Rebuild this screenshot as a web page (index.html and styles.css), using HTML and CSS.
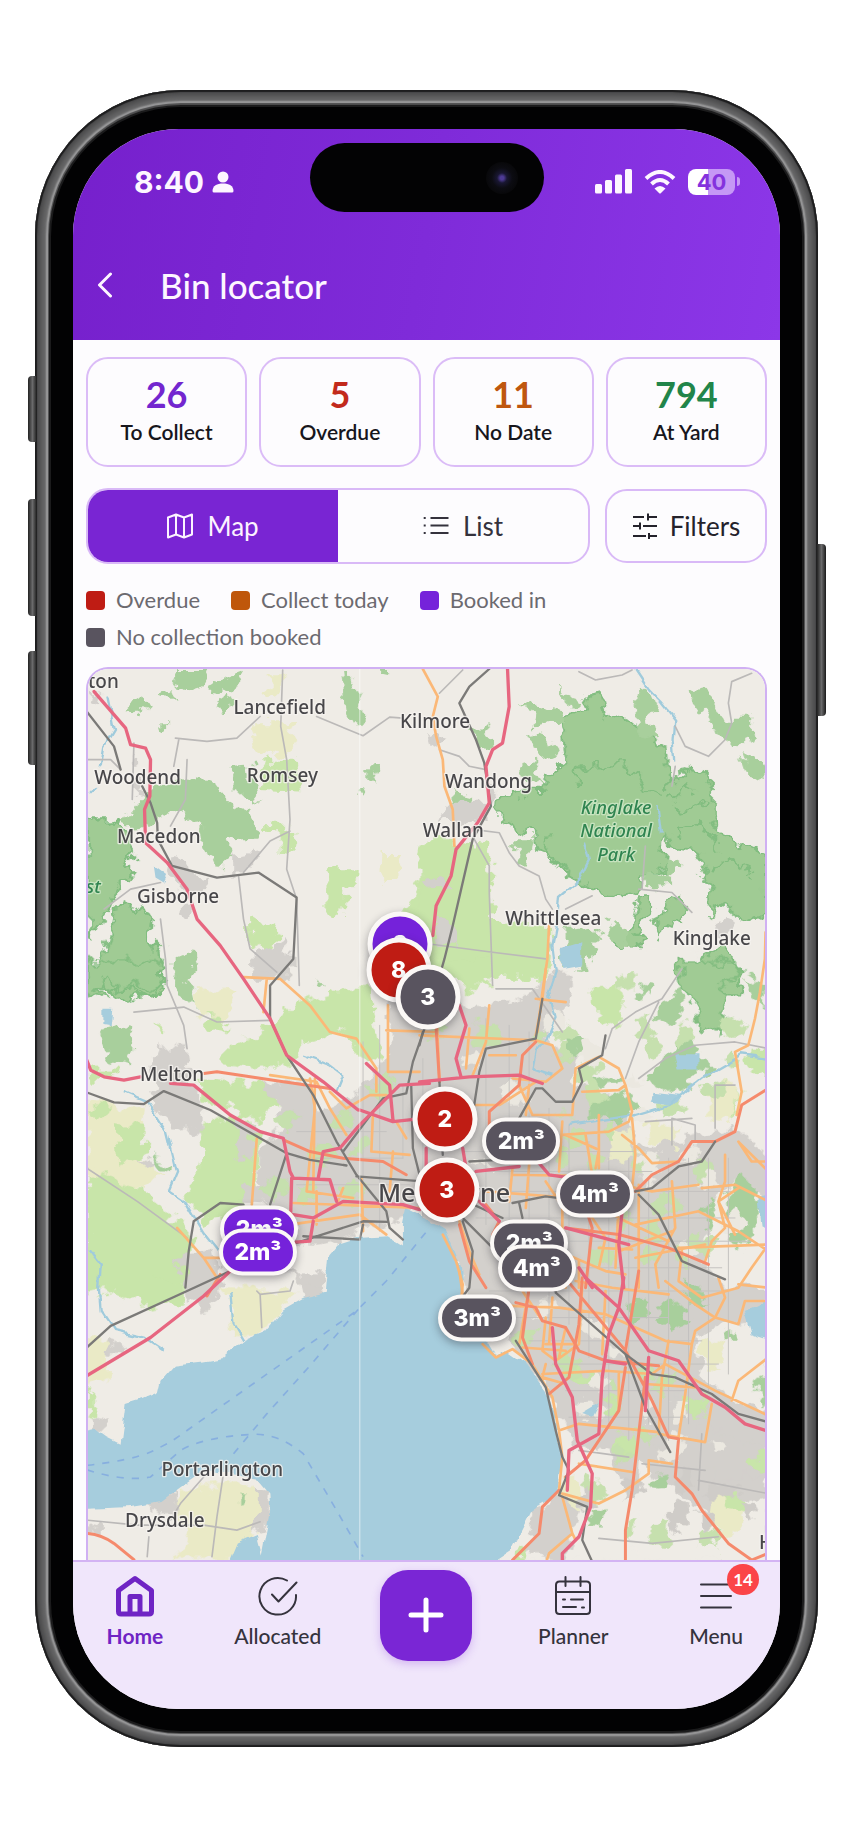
FILE: index.html
```html
<!DOCTYPE html>
<html lang="en">
<head>
<meta charset="utf-8">
<meta name="viewport" content="width=device-width, initial-scale=1">
<title>Bin locator</title>
<link rel="stylesheet" href="styles.css">
</head>
<body>
<div class="phone">
  <span class="side-key key-action"></span>
  <span class="side-key key-up"></span>
  <span class="side-key key-down"></span>
  <span class="side-key key-power"></span>
  <div class="bezel">
    <div class="screen">
      <header class="header">
        <div class="status">
          <div class="status-time">
            <span>8:40</span>
            <svg class="person" viewBox="0 0 22 22" aria-hidden="true"><circle cx="11" cy="6" r="5.5"/><path d="M0.5 20C0.5 15 5 12.6 11 12.6S21.5 15 21.5 20Q21.5 21.6 20 21.6H2Q.5 21.6 .5 20Z"/></svg>
          </div>
          <div class="island"><span class="camera"></span></div>
          <div class="status-icons">
            <svg class="signal" viewBox="0 0 37 25" aria-hidden="true"><rect x="0" y="15" width="7" height="9.500" rx="1.500"/><rect x="10" y="11" width="7" height="13.500" rx="1.500"/><rect x="20" y="5.500" width="7" height="19" rx="1.500"/><rect x="30" y="0" width="7" height="24.500" rx="1.500"/></svg>
            <svg class="wifi" viewBox="0 0 32 24" aria-hidden="true"><path class="wifi-arc" d="M2 8.500Q16-4.500 30 8.500M7.500 14Q16 6 24.500 14"/><path d="M10.500 18.500Q16 13.500 21.500 18.500L17 23Q16 24 15 23Z"/></svg>
            <span class="battery"><span class="battery-body">40</span><span class="battery-nub"></span></span>
          </div>
        </div>
        <div class="title-bar">
          <button class="back" type="button" aria-label="Back"><svg viewBox="0 0 16 26" aria-hidden="true"><path d="M13.500 2L2.500 13L13.500 24"/></svg></button>
          <h1 class="title">Bin locator</h1>
        </div>
      </header>

      <main class="content">
        <section class="stats">
          <div class="stat"><strong class="stat-value purple">26</strong><span class="stat-label">To Collect</span></div>
          <div class="stat"><strong class="stat-value red">5</strong><span class="stat-label">Overdue</span></div>
          <div class="stat"><strong class="stat-value orange">11</strong><span class="stat-label">No Date</span></div>
          <div class="stat"><strong class="stat-value green">794</strong><span class="stat-label">At Yard</span></div>
        </section>

        <div class="controls">
          <div class="toggle">
            <button class="segment active" type="button" aria-pressed="true">
              <svg class="icon" viewBox="0 0 26 26" aria-hidden="true"><path d="M1 4.500L9 1.500L17 4.500L25 1.500V21.500L17 24.500L9 21.500L1 24.500ZM9 1.500V21.500M17 4.500V24.500"/></svg>
              <span>Map</span>
            </button>
            <button class="segment" type="button" aria-pressed="false">
              <svg class="icon" viewBox="0 0 26 26" aria-hidden="true"><path d="M7.500 5H25.500M7.500 12.500H25.500M7.500 20H25.500M.7 5H2.700M.7 12.500H2.700M.7 20H2.700"/></svg>
              <span>List</span>
            </button>
          </div>
          <button class="filters" type="button">
            <svg class="icon" viewBox="0 0 26 26" aria-hidden="true"><path d="M1 4H12M16 0.500V7.500M16 4H25M1 13H8M8 9.500V16.500M11 13H25M1 23H14M17 20V26M17 23H25"/></svg>
            <span>Filters</span>
          </button>
        </div>

        <ul class="legend">
          <li><i class="swatch bg-red"></i>Overdue</li>
          <li><i class="swatch bg-orange"></i>Collect today</li>
          <li><i class="swatch bg-purple"></i>Booked in</li>
          <li><i class="swatch bg-grey"></i>No collection booked</li>
        </ul>

        <section class="map" aria-label="Bin map">
          <svg class="map-art" viewBox="48 27 2046 2682" preserveAspectRatio="xMidYMid slice" aria-hidden="true">
            <defs>
              <filter id="rough" x="0" y="0" width="2150" height="2750" filterUnits="userSpaceOnUse">
                <feTurbulence type="fractalNoise" baseFrequency="0.022" numOctaves="3" seed="4" result="n"/>
                <feDisplacementMap in="SourceGraphic" in2="n" scale="70" xChannelSelector="R" yChannelSelector="G"/>
              </filter>
              <filter id="wobble" x="0" y="0" width="2150" height="2750" filterUnits="userSpaceOnUse">
                <feTurbulence type="fractalNoise" baseFrequency="0.02" numOctaves="2" seed="9" result="n"/>
                <feDisplacementMap in="SourceGraphic" in2="n" scale="26" xChannelSelector="R" yChannelSelector="G"/>
              </filter>
            </defs>
            <rect class="land" x="0" y="0" width="2150" height="2750"/>

            <!-- land cover -->
            <g filter="url(#rough)">
              <g>
                <path class="farm" d="M540 190L680 190L650 290L560 270ZM930 590L990 590L980 665L920 665ZM590 40L640 40L620 120L590 110Z"/>
                <path class="grass" d="M585 490L660 490L660 525L585 530ZM635 520L680 520L675 580L635 575ZM770 630L870 630L870 675L825 680L820 765L770 755ZM590 300L690 300L700 390L560 385ZM1000 760L1080 590L1120 560L1120 960L960 960ZM540 770L590 800L630 810L600 890L540 860Z"/>
                <path class="wood" d="M320 30L420 30L400 80L350 95L300 80ZM440 60L510 35L520 70L460 100L420 90ZM165 155L190 110L235 130L220 150ZM255 100L300 90L310 115L270 120ZM275 190L305 190L305 215L280 215ZM440 130L470 110L490 140L460 160ZM820 30L835 30L870 120L890 170L880 200L830 175L825 100ZM460 320L540 315L560 420L580 440L520 410L490 380ZM340 350L440 370L490 440L540 460L570 520L520 540L470 545L480 600L440 635L430 590L380 560L400 500L340 450L250 480L200 510L150 500L230 400ZM905 310L935 300L925 350L905 385ZM870 380L880 380L875 410L865 410ZM310 900L360 880L380 930L340 990L310 950ZM925 30L960 30L955 45L930 40Z"/>
                <path class="wood deep" d="M48 490L75 480L110 480L150 500L190 560L170 610L190 640L140 700L110 760L60 830L48 800ZM130 750L170 740L240 760L230 820L270 870L275 960L250 1000L140 1020L60 960L110 860L120 800ZM48 930L140 960L270 950L280 1000L220 1010L180 980L120 1000L48 970Z"/>
                <path class="urban" d="M480 590L560 575L570 600L520 640L480 640ZM310 590L350 600L370 650L420 660L400 700L330 690L300 640ZM560 890L640 840L660 960L540 960ZM190 290L215 300L210 330L190 330ZM190 370L225 380L220 410L190 400ZM60 80L85 95L80 130L55 110ZM320 740L360 740L370 770L330 765Z"/>
              </g>
              <g transform="translate(1050 0)">
                <path class="wood deep" d="M415 175L490 160L510 100L550 95L565 160L640 190L690 230L740 260L750 380L800 320L840 330L880 370L880 470L910 540L960 550L1050 590L1050 760L1000 790L960 780L920 730L870 770L880 690L830 570L760 560L740 520L730 640L700 640L650 690L600 720L540 700L480 680L430 620L370 580L330 520L240 480L245 420L320 400L370 400L380 340L440 320L430 240ZM660 700L700 700L700 740L660 820L690 850L620 870L590 850L640 800ZM740 730L790 700L790 790L720 830L710 790ZM840 900L900 870L960 920L960 1010L880 1010L820 980Z"/>
                <path class="park-line" d="M480 320H620L650 350L680 390L730 400M480 320V400M390 540L380 600L430 620M760 420L800 380L830 400M760 440L800 450L870 420M770 520L830 500L880 520L900 580M870 620L940 600L1000 640"/>
                <path class="wood" d="M300 130L420 150L430 180L350 200ZM430 90L490 130L450 150ZM330 210L400 240L420 300L370 310ZM660 80L700 100L720 150L680 200L720 230L660 240L650 150ZM810 90L860 80L890 140L920 180L1000 180L1010 230L920 270L900 220L850 150ZM150 200L210 200L215 260L180 270ZM310 310L350 300L370 370L310 350ZM100 400L160 415L160 450L110 440ZM440 810L530 800L550 850L500 920L440 930ZM970 280L1045 320L1045 355L990 340ZM730 600L785 610L780 645L730 640ZM680 640L750 650L750 680L690 685ZM290 540L340 540L330 610L300 610ZM580 780L640 830L620 860L560 840Z"/>
                <path class="grass" d="M10 540L100 540L200 560L220 660L215 800L400 810L390 960L0 960L0 600ZM200 780L380 800L375 880L230 870Z"/>
                <path class="land" d="M100 480L160 470L190 520L150 540ZM530 850L700 870L850 850L820 960L500 960Z"/>
                <path class="urban" d="M80 430L190 430L200 470L140 500L50 480ZM20 650L80 655L100 690L30 695ZM50 780L100 800L110 870L50 850ZM20 230L70 220L80 250L30 265ZM200 380L240 400L230 430L200 420ZM880 790L930 780L940 820L890 830Z"/>
              </g>
              <g transform="translate(0 930)">
                <path class="farm" d="M48 400L220 420L200 560L280 620L200 640L48 560ZM380 60L500 60L450 160L380 150ZM48 560L160 560L220 660L48 640Z"/>
                <path class="grass" d="M48 610L200 660L280 720L370 820L350 960L48 960ZM380 480L500 440L580 480L560 600L520 740L400 760L340 680L380 640L390 560ZM130 470L230 480L220 560L150 590ZM460 230L560 210L640 120L760 80L870 60L900 160L780 200L700 230L680 280L560 300L460 290ZM380 320L580 350L640 400L560 450L470 420L400 400ZM600 180L690 130L720 230L650 220ZM250 165L285 170L280 185L250 180ZM790 60L900 60L930 280L860 260L820 170L760 150ZM60 300L140 300L130 330L60 330ZM60 420L110 420L100 450L60 450ZM400 150L480 160L480 190L410 180Z"/>
                <path class="wood" d="M90 190L160 170L190 210L170 290L120 270ZM320 20L370 60L380 100L340 100ZM245 570L300 585L295 605L250 590ZM740 30L760 55L735 50Z"/>
                <path class="wood deep" d="M48 -20L280 -20L270 40L230 60L180 40L150 60L100 20L80 60L110 90L48 70Z"/>
                <path class="urban" d="M270 230L350 240L360 300L340 340L400 400L400 480L310 490L270 440L250 370L240 300ZM500 450L560 470L540 580L500 570ZM570 340L700 340L760 420L870 380L900 330L960 250L960 100L1100 100L1100 720L950 760L880 790L800 810L690 830L660 740L600 720L560 620L570 540L640 480L620 420ZM300 860L440 850L460 960L400 1040L350 1000L340 920ZM200 570L260 590L230 610ZM540 -40L680 -40L680 0L540 10ZM520 640L600 660L590 710L520 700ZM680 920L760 930L770 990L700 1000Z"/>
                <path class="scatter grass-line" d="M640 440L760 560L620 660L820 700L900 560L820 460L960 340"/>
              </g>
              <g transform="translate(1050 930)">
                <path class="urban" d="M0 100L210 110L370 60L380 20L460 20L450 110L380 200L420 260L480 250L460 340L620 400L660 540L800 510L960 480L1050 560L1050 700L950 640L880 700L860 900L920 960L1050 960L1050 1860L900 1780L700 1560L500 1500L440 1380L380 1260L250 1090L150 960L100 860L0 740Z"/>
                <path class="grass" d="M40 -30L210 -30L220 60L130 60L100 20L60 10ZM520 50L600 40L620 120L580 180L530 150ZM900 340L960 360L950 460L880 440ZM1000 240L1050 240L1050 320L990 300Z"/>
                <path class="wood" d="M680 50L710 60L690 90L670 80ZM720 100L790 60L800 140L760 180L720 150ZM790 200L830 240L880 290L810 340L740 380L680 340L700 300L760 260ZM440 210L480 200L520 240L450 260ZM510 340L600 310L610 340L540 350ZM520 400L620 370L670 420L600 460L530 450ZM980 20L1040 60L1040 120L1000 90ZM780 190L800 195L800 215L780 210ZM960 620L1010 650L1020 800L960 860L930 800L920 700ZM870 700L890 740L880 790L855 780Z"/>
                <path class="wood deep" d="M780 -20L960 -20L950 30L910 60L930 150L900 200L840 180L830 100L790 60Z"/>
                <path class="farm" d="M570 480L640 480L650 570L570 580ZM870 340L960 350L940 470L880 460ZM680 470L780 480L760 530L690 520Z"/>
                <!-- suburban parks -->
                <path class="scatter grass-line" d="M30 180L400 210L600 480L300 560L900 600L700 720L400 680L900 850L600 880L300 820"/>
                <path class="scatter grass-line" d="M620 20L680 180L640 260L900 160L1000 200L860 400L700 420M420 180L520 290L440 440"/>
                <path class="scatter land-line" d="M380 150L640 330L700 620L820 560L950 760L760 880M150 260L300 400L200 600"/>
              </g>
              <g transform="translate(0 1860)">
                <path class="grass" d="M48 -10L240 -10L340 30L340 70L220 90L170 70L120 40L48 50ZM48 330L70 330L70 420L48 410Z"/>
                <path class="farm" d="M48 190L120 180L120 290L48 330ZM450 30L680 40L640 90L570 170L490 170L480 60ZM340 640L560 620L590 680L560 770L470 850L310 850L350 760L310 700Z"/>
                <path class="urban" d="M60 420L110 430L110 465L60 465ZM110 180L160 200L160 230L110 220ZM230 680L320 630L320 700L250 710ZM560 620L600 650L590 760L560 770ZM640 -10L765 -10L765 30L690 10ZM48 760L90 740L90 780Z"/>
                <path class="wood" d="M510 650L530 655L525 680L510 675Z"/>
              </g>
              <g transform="translate(1050 1860)">
                <path class="land" d="M430 500L560 520L640 640L620 850L340 850L430 700ZM660 560L780 640L860 700L1050 650L1050 850L640 850ZM830 160L1050 110L1050 400L950 380L850 290Z"/>
                <path class="farm" d="M850 180L930 200L900 280L850 250ZM880 640L980 700L940 780L860 740ZM430 600L480 600L480 700L430 660Z"/>
                <path class="urban" d="M340 700L420 650L480 700L440 850L330 820ZM770 670L820 680L810 720L770 720ZM830 440L960 480L1050 520L1030 590L900 610L840 560ZM660 280L780 320L740 520L660 450Z"/>
                <path class="grass" d="M920 640L990 670L980 710L920 700ZM580 470L660 470L650 540L580 530ZM560 360L610 370L590 420L560 400ZM450 280L540 290L530 330L460 310ZM790 350L870 370L850 420L790 400ZM980 540L1050 530L1050 580L980 570ZM280 820L340 790L330 850L270 850Z"/>
                <path class="wood" d="M720 80L790 70L820 130L770 160L710 130ZM620 90L680 60L690 120L640 140ZM690 600L750 590L740 630L700 625ZM510 710L560 720L550 740L510 740ZM1010 320L1050 300L1050 390L1020 360ZM790 10L850 30L870 80L820 80ZM920 170L960 165L950 190L925 190Z"/>
                <path class="scatter grass-line" d="M300 170L560 330L750 250L700 450L520 620L600 760L850 780L1000 820"/>
                <path class="scatter land-line" d="M360 90L620 180L480 400L820 400L760 520L960 500"/>
                <path class="scatter urban-line" d="M480 680L760 600L900 640L700 760L1000 700"/>
              </g>
            </g>

            <!-- water -->
            <g filter="url(#wobble)">
              <path class="water" transform="translate(0 1860)" d="M0 470L75 455L110 480L150 500L165 380L215 365L262 345L270 310L310 265L400 255L460 245L530 185L580 165L640 95L700 60L765 45L775 -70L800 -100L860 -120L960 -125L1000 -100L1000 -160L1010 -210L1050 -190L1130 -140L1160 -70L1175 -30L1180 60L1250 190L1280 240L1320 225L1370 260L1430 340L1460 420L1475 520L1480 560L1465 640L1425 680L1390 700L1370 740L1330 820L1270 860L470 870L500 800L560 775L575 830L600 700L598 650L560 605L480 590L400 580L330 630L270 675L180 690L0 698Z"/>
              <path class="water" d="M1475 870L1540 850L1540 920L1480 930ZM250 620L290 650L280 670L255 655ZM95 1050L125 1050L120 1100L95 1095ZM2030 1960L2110 1920L2110 2050L2050 2030ZM1820 1190L1890 1190L1890 1230L1830 1230ZM1755 1300L1840 1310L1820 1340L1740 1330ZM1540 2270L1590 2240L1570 2280ZM2070 1620L2110 1610L2110 1710L2080 1700Z"/>
              <path class="river" d="M1700 30L1740 90L1780 130L1820 180L1815 240L1820 300M1770 440L1780 520M1545 550L1560 600L1530 660L1470 710L1465 780L1450 860L1460 940L1440 1000L1460 1080L1430 1150L1400 1180L1390 1230L1450 1250M110 110L130 210L100 260L90 320M75 380L55 400M160 1300L230 1330L290 1420L310 1500L320 1540L295 1600L340 1630L400 1730L440 1780M50 1770L90 1820L85 1900L90 1960L130 2020L220 2040L280 2080M480 1900L490 2000L520 2050M700 1190L780 1220L820 1250L800 1300M2094 1200L2020 1190L1900 1260L1800 1340L1700 1370L1500 1400"/>
            </g>
            <path class="ferry" d="M48 2425Q180 2410 240 2385L300 2355L860 1960L950 1870L1080 1710M48 2438Q160 2475 240 2460L330 2380Q400 2340 540 2332Q620 2325 700 2390L800 2560L880 2700M490 2390L590 2270L720 2125L870 1950"/>

            <!-- minor roads and streets -->
            <g class="minor">
              <path d="M638 30L632 200L650 300L660 480L650 630L680 720L688 980M315 235L410 245L500 235L570 170M740 170L800 195L880 228L960 172L1000 175M325 240L310 320M190 250L185 420M350 300L345 420L300 500M660 515L600 545L520 640M505 650L520 780L540 870L620 940M270 780L285 900L290 980L340 1100L350 1170M190 1060L340 1045L440 1090L600 1085M100 750L180 690L270 670M48 300L120 300L150 330M48 1530L200 1630L350 1740"/>
              <path transform="translate(1050 0)" d="M480 35L530 60L610 45L640 30M130 30L60 100M1000 40L940 65L930 130L940 190M940 190L920 240L870 290L800 260L770 200M770 320L760 380M60 270L120 290L150 320L200 330M160 510L240 520L270 580L300 620L360 650L380 720L400 750M165 540L210 620L210 700L220 980M30 855L220 880L380 900M440 750L520 710M660 690L760 700L820 760M670 690L680 560"/>
              <path transform="translate(1050 930)" d="M790 0L730 90L650 130L580 180L560 240M720 100L660 220L620 330M660 330L740 270L830 230L950 220L1050 240M230 60L340 60L430 190M890 480L890 350L950 350M680 460L820 450M760 530L760 450L830 470L830 520"/>
              <path d="M560 1900L570 1910L575 2010M570 1910L660 1900L670 1870M458 2460L440 2580L425 2700M400 2460L330 2540L300 2590M48 2590L200 2605L400 2605L500 2620L570 2595M235 2640L230 2700M1590 2645L1750 2660L1950 2640M1890 2470L2100 2510M1900 2330L1890 2500M1530 2380L1680 2400M1720 2420L1910 2440"/>
            </g>
            <g class="streets">
              <path d="M880 1150V1700M930 1100V1720M1000 1280V1500M1060 1200V1680M1250 1080V1700M1320 1100V1800M1380 1120V1900M1440 1350V2000M1500 1400V2000M1560 1450V2100M1620 1500V2300M1680 1500V2350M1740 1560V2300M1800 1500V2350M1860 1500V2300M1920 1500V2200M1980 1500V2150"/>
              <path d="M680 1420H950M680 1500H1000M680 1580H1020M1180 1480H1700M1180 1540H1750M1180 1600H2000M1220 1680H2000M1250 1750H2050M1300 1830H1960M1260 1900H1980M1300 1980H1800M1380 2050H1900M1450 2120H1950M1490 2200H1850M1500 2280H1850"/>
            </g>

            <!-- primary roads -->
            <g class="primary">
              <path d="M1060 27L1105 110L1090 170L1100 230L1120 300L1125 380L1150 450L1155 560M1440 800L1435 900L1420 1000L1405 1120M2092 820L2090 900L2075 1000L2060 1080L2040 1160L2000 1180L2020 1300L2005 1370M600 1250L740 1270L780 1350L830 1430M560 1440L545 1640M720 1260L735 1350L710 1600L850 1620M735 1260L730 1600M780 1300L830 1350L900 1310L950 1310M910 1360L905 1480L1020 1490M520 955L630 960L720 1040L780 1120L860 1140L920 1230L920 1300M590 960L580 1060M955 1040L955 1240L1050 1240M950 1115L1100 1120M670 1635L1050 1650M740 1600V1700M875 1560L880 1720M660 1700L870 1670L950 1730M820 1590L800 1640M320 1710L400 1800L440 1860M400 1800L460 1800M970 1480L960 1600M980 1390L1010 1440"/>
              <path transform="translate(1050 930)" d="M0 200L350 215L400 230L430 300L380 340L280 330M50 90L60 340M210 110L200 220L160 320M350 90L440 100M380 0L370 90L350 200M150 180L140 300M210 260L290 260M170 410L240 410L350 340M300 350L340 440L460 440L470 300L540 265L600 300L620 350L600 365L490 370M330 350L320 440M620 350L640 430L630 460L570 490L430 500M640 450L650 560L640 660M610 500L660 540L700 585L780 580M440 500L540 545L530 600M500 500L520 620M540 440L540 600M430 460L420 610M280 620L600 625M280 600L270 700M330 590L320 720M430 690L430 900L440 960M510 700L620 760L750 820M600 700L590 900M660 650L660 960M760 640L770 780L710 890L720 960M850 660L950 650L1050 700M650 770L840 730L960 790L1050 850M1050 610L960 520L1000 580L1050 580M920 560L920 640L900 700L950 800M960 660L900 700L920 780L880 820L860 880M780 840L1050 830L1000 900M790 850L780 940L850 990L960 960L1000 900"/>
              <path transform="translate(1050 930)" d="M70 800L110 880L130 950L125 1000M120 760L150 850L180 920M240 830L400 830M420 850L560 910L620 920M470 940L580 960L750 980M440 700L500 720L560 810L540 900M200 670L460 690M380 640L420 700M560 640L700 670L840 650M600 850L760 790M650 870L860 830M480 880L480 960M540 840L640 845"/>
              <path transform="translate(1050 1860)" d="M190 200L230 240L280 215L340 260L400 360L420 460L430 540L420 640M120 -20L130 50M150 80L420 90L560 110L740 190L820 200L830 160L890 120L920 60L900 0M740 10L830 80L890 120L960 140L980 70L1050 70M370 290L560 280L700 290L740 260L890 340L1050 415M940 370L960 310L1050 240M560 40L550 230M490 20L480 200L410 250L370 220L380 120M440 150L420 240M750 190L730 300L720 470L860 495L880 380M820 200L800 350L780 480M420 460L480 440L720 465M480 560L640 585M430 650L540 680L620 640L690 590L690 550L760 560M430 660L460 770L390 830L380 860M460 770L470 790M680 320L830 330M400 60L390 200M330 30L300 200M310 40L370 130M310 210L440 220M600 290L600 400L560 460M380 260L370 300L440 320M380 200L470 200M1050 30L960 20"/>
            </g>

            <!-- trunk roads -->
            <g class="trunk">
              <path d="M400 1245L440 1240L640 1270L780 1290M640 1445L720 1480L820 1500L940 1510L1010 1550M48 2630Q90 2632 130 2660L190 2709M450 1850L410 1915"/>
              <path transform="translate(1050 930)" d="M1050 360L970 410L950 490L890 520L820 520L780 580L700 620L650 670M210 480L210 430L300 350L310 260L350 220M50 180L60 340M120 770L150 880L200 960M200 710L240 760L220 800M440 780L600 800L750 840L870 890M500 720L520 780L500 960M300 760L340 800"/>
              <path transform="translate(1050 1860)" d="M290 75L350 90L370 130L440 150L480 220L560 250L720 265M430 -10L620 220L700 370L750 480L780 485L770 600L820 650L850 700L930 800L1000 850L1050 830M490 0L480 140L450 300L390 350M330 30L310 180L340 260M620 270L600 400L500 550L440 600M660 -20L620 220M680 300L660 470L640 640L620 760L620 860M420 640L370 690L360 770L280 850"/>
            </g>

            <!-- railways -->
            <g class="rail">
              <path d="M48 155L130 260L150 330M215 380L240 430L260 490L262 540L305 620L440 655L565 640L680 715L670 900L600 980L600 1080L650 1190L730 1310L800 1450L860 1550L950 1660L960 1710L1000 1745M48 1302L130 1332L220 1337L280 1298L420 1355L650 1485L720 1505L830 1522M650 1485L600 1640M520 1640L450 1635L370 1690L355 1780L345 1890M48 2070L120 2005L350 1900L480 1840M680 1755L880 1690L955 1692M880 1700L870 1745L700 1735M860 1555L1060 1570L1300 1680M820 1480L940 1320L1010 1305L1030 1210L1065 1110L1125 900L1150 800L1210 540L1265 440L1245 310L1220 240L1170 130L1200 80L1260 27M1025 1280L1030 1470L1060 1590"/>
              <path transform="translate(1050 930)" d="M10 190L0 230M60 340L70 560M370 90L350 210L200 240L180 310L160 440M300 450L350 360L370 360L410 400L460 400L490 340L480 300L550 260L560 200M150 580L240 575M280 705L380 685L420 690M300 705L310 750M650 670L700 660L780 595L850 580L890 520M660 680L720 740L790 880L920 935M120 740L230 850L410 970M130 760L160 850L150 960L120 1000"/>
              <path transform="translate(1050 1860)" d="M290 190L380 330L410 460L430 540L450 580L420 655L505 690L490 790L520 855M410 45L620 230L680 390L755 525M620 230L700 290L770 300L880 350L960 410L1050 435"/>
            </g>

            <!-- motorways -->
            <g class="motorway">
              <path d="M70 95L165 205L180 255L225 265L240 300L238 410L222 450L225 550L290 610L350 690L380 780L450 860L520 960L600 1080L650 1190L760 1270L865 1355M48 1205L60 1235L100 1255L160 1265L210 1255M300 1275L370 1280L480 1370L570 1420L640 1440L660 1540L670 1560L780 1565L800 1630M745 1560L760 1480L810 1470L865 1405L990 1280L1080 1275M890 1215L960 1280L970 1385M870 1355L970 1390L1060 1380M670 1670L730 1680L820 1630L1000 1640L1050 1655M665 1560L662 1670M730 1690L720 1750L640 1755L480 1840L400 1915L240 2040L48 2155"/>
              <path d="M1315 27L1320 140L1300 250L1270 270L1250 320L1260 430L1225 490L1160 570L1145 650L1100 740L1090 830"/>
              <path transform="translate(1050 930)" d="M120 110L140 170L110 270L125 325M0 340L150 325L300 320L370 345M20 540V600M130 540L140 600M170 610L300 595M360 585L390 620L460 630L510 720M610 730L600 830L615 960M180 700L240 760M440 780L630 830M480 900L520 960"/>
              <path transform="translate(1050 1860)" d="M500 0L600 90L690 220L780 250L850 350L920 390L980 440L1050 462M615 0L600 90L570 170L550 300L540 470L450 520L445 640M400 150L410 260L460 360L475 490L520 590L515 690L480 780L430 830L430 860M560 250L620 260M690 240L680 400"/>
            </g>

            <path class="tile-seam" d="M870 27V2709"/>

            <g class="place">
              <text x="52" y="84" class="start">ton</text>
              <text x="629" y="162">Lancefield</text>
              <text x="1097" y="204">Kilmore</text>
              <text x="637" y="368">Romsey</text>
              <text x="201" y="372">Woodend</text>
              <text x="1258" y="386">Wandong</text>
              <text x="265" y="552">Macedon</text>
              <text x="1152" y="532">Wallan</text>
              <text x="323" y="733">Gisborne</text>
              <text x="1453" y="799">Whittlesea</text>
              <text x="1930" y="858">Kinglake</text>
              <text x="305" y="1267">Melton</text>
              <text x="1124" y="1633" class="city">Melbourne</text>
              <text x="456" y="2457">Portarlington</text>
              <text x="283" y="2612">Drysdale</text>
              <text x="2072" y="2678" class="start">H</text>
            </g>
            <g class="park-name">
              <text x="1642" y="463">Kinglake</text>
              <text x="1642" y="533">National</text>
              <text x="1642" y="605">Park</text>
              <text x="46" y="701" class="start">st</text>
            </g>
          </svg>

          <button type="button" class="pin cluster bg-purple" style="left:46.1%;top:30.9%">2</button>
          <button type="button" class="pin cluster bg-red" style="left:45.9%;top:33.8%">8</button>
          <button type="button" class="pin cluster bg-grey" style="left:50.2%;top:36.8%">3</button>
          <button type="button" class="pin cluster bg-red" style="left:52.7%;top:50.5%">2</button>
          <button type="button" class="pin cluster bg-red" style="left:53%;top:58.5%">3</button>
          <button type="button" class="pin pill bg-grey" style="left:64%;top:53%">2m³</button>
          <button type="button" class="pin pill bg-grey" style="left:74.9%;top:58.9%">4m³</button>
          <button type="button" class="pin pill bg-grey" style="left:65.2%;top:64.4%">2m³</button>
          <button type="button" class="pin pill bg-grey" style="left:66.3%;top:67.3%">4m³</button>
          <button type="button" class="pin pill bg-grey" style="left:57.5%;top:72.9%">3m³</button>
          <button type="button" class="pin pill bg-purple" style="left:25.3%;top:62.9%">2m³</button>
          <button type="button" class="pin pill bg-purple" style="left:25.1%;top:65.4%">2m³</button>
        </section>
      </main>

      <nav class="tabs" aria-label="Main">
        <a class="tab current" href="#home">
          <svg viewBox="0 0 42 42" aria-hidden="true"><path class="home-line" d="M4.500 15.500L21 3.500L37.500 15.500V36.500Q37.500 39 35 39H7Q4.500 39 4.500 36.500ZM16 39V21.500H26V39"/></svg>
          <span>Home</span>
        </a>
        <a class="tab" href="#allocated">
          <svg viewBox="0 0 42 42" aria-hidden="true"><path d="M30 5.500A18.300 18.300 0 1 0 39 20M15 19.500L21.500 26.500L39.500 7.500"/></svg>
          <span>Allocated</span>
        </a>
        <button class="fab" type="button" aria-label="Add"><svg viewBox="0 0 36 36" aria-hidden="true"><path d="M18 3V33M3 18H33"/></svg></button>
        <a class="tab" href="#planner">
          <svg viewBox="0 0 42 42" aria-hidden="true"><path d="M7.500 6.500H34.500Q38 6.500 38 10V35.500Q38 39 34.500 39H7.500Q4 39 4 35.500V10Q4 6.500 7.500 6.500ZM4 17H38M13.500 2V11M28.500 2V11M11 24.500H13M19 24.500H31M11 32H24M30 32.500H32"/></svg>
          <span>Planner</span>
        </a>
        <a class="tab" href="#menu">
          <svg viewBox="0 0 42 42" aria-hidden="true"><path d="M6 9.500H36M6 21H36M6 32.500H36"/></svg>
          <span>Menu</span>
          <b class="badge">14</b>
        </a>
      </nav>
    </div>
  </div>
</div>
</body>
</html>
```

FILE: styles.css
```css
* { box-sizing: border-box; }

body {
  margin: 0;
  padding: 90px 34px 97px 35px;
  background: #fff;
  font-family: Lato, "Open Sans", sans-serif;
  color: #17161c;
}

button { font: inherit; color: inherit; cursor: pointer; }
svg { display: block; }

/* Device */
.phone {
  position: relative;
  padding: 17px 16px 16px;
  border-radius: 146px;
  background: #4b4b4c;
  box-shadow: inset 0 0 1px 2px #1d1d1e, inset 0 0 4px 6px #4c4c4d, inset 0 0 2px 11px #666667, inset 0 0 1px 13px #a2a2a3;
}
.bezel {
  position: relative;
  padding: 22px;
  border-radius: 130px;
  background: #020203;
  box-shadow: 0 0 0 2px #1b1b1c;
}
.screen {
  display: flex;
  flex-direction: column;
  overflow: hidden;
  border-radius: 106px;
  background: #fdfcfe;
}
.side-key {
  position: absolute;
  left: -7px;
  width: 9px;
  border-radius: 4px 0 0 4px;
  background: linear-gradient(90deg, #222, #6a6a6b 50%, #1a1a1a);
}
.key-action { top: 286px; height: 66px; }
.key-up { top: 409px; height: 117px; }
.key-down { top: 561px; height: 114px; }
.key-power {
  top: 454px;
  right: -8px;
  left: auto;
  height: 172px;
  border-radius: 0 4px 4px 0;
}

/* Header */
.header {
  padding-top: 14px;
  color: #fdf6ff;
  background: linear-gradient(100deg, #7620cc, #7f2bd9 50%, #8c37e8);
}
.status {
  display: grid;
  grid-template-columns: 1fr 234px 1fr;
  align-items: center;
}
.status-time {
  display: flex;
  align-items: center;
  gap: 8px;
  padding: 8px 0 0 61px;
  font: 700 30px/36px Inter, sans-serif;
}
.person { width: 22px; height: 22px; fill: currentColor; }
.island {
  display: flex;
  align-items: center;
  justify-content: flex-end;
  height: 69px;
  padding-right: 26px;
  border-radius: 35px;
  background: #030304;
}
.camera {
  width: 32px;
  height: 32px;
  border-radius: 50%;
  background: radial-gradient(circle, #4d3a94 0 8%, #191732 22%, #0c0c12 45%, #08080a 70%);
}
.status-icons {
  display: flex;
  align-items: center;
  justify-content: flex-end;
  gap: 12px;
  padding: 8px 40px 0 0;
}
.signal { width: 37px; height: 25px; fill: currentColor; }
.wifi { width: 32px; height: 24px; fill: currentColor; }
.wifi-arc { fill: none; stroke: currentColor; stroke-width: 4; }
.battery { display: flex; align-items: center; gap: 2px; }
.battery-body {
  width: 47px;
  border-radius: 8px;
  background: linear-gradient(90deg, #fff 43%, #c598f5 43%);
  color: #8432dd;
  font: 700 22px/26px Inter, sans-serif;
  text-align: center;
}
.battery-nub { width: 3px; height: 9px; border-radius: 0 3px 3px 0; background: #c598f5; }
.title-bar {
  display: flex;
  align-items: center;
  gap: 45px;
  padding: 54px 22px 36px;
}
.back { display: flex; padding: 0 2px; border: 0; background: none; }
.back svg { width: 16px; height: 26px; fill: none; stroke: currentColor; stroke-width: 3; stroke-linecap: round; stroke-linejoin: round; }
.title { margin: 0; font-size: 35px; line-height: 38px; font-weight: 500; }

/* Content */
.content { padding: 17px 13px 0; }
.stats { display: grid; grid-template-columns: repeat(4, 1fr); gap: 12px; }
.stat {
  display: flex;
  flex-direction: column;
  align-items: center;
  gap: 4px;
  padding: 14px 4px 20px;
  border: 2px solid #dbbcf7;
  border-radius: 22px;
}
.stat-value { font-size: 36px; line-height: 42px; font-weight: 700; }
.stat-label { font-size: 21px; line-height: 26px; font-weight: 600; }
.purple { color: #7326cf; }
.red { color: #c22a1c; }
.orange { color: #bf570f; }
.green { color: #21854a; }

.controls { display: flex; align-items: center; gap: 15px; margin-top: 21px; }
.toggle {
  display: flex;
  flex: 1;
  overflow: hidden;
  border: 2px solid #d9b9f7;
  border-radius: 22px;
}
.segment {
  display: flex;
  flex: 1;
  align-items: center;
  justify-content: center;
  gap: 14px;
  padding: 20px 0;
  border: 0;
  background: transparent;
  color: #34323c;
  font-size: 26px;
  line-height: 32px;
}
.segment.active { background: #7925d3; color: #fcf3ff; }
.filters {
  display: flex;
  flex: 0 0 162px;
  align-items: center;
  justify-content: center;
  gap: 12px;
  padding: 19px 0;
  border: 2px solid #d9b9f7;
  border-radius: 22px;
  background: transparent;
  color: #24222b;
  font-size: 26px;
  line-height: 32px;
}
.icon { width: 26px; height: 26px; fill: none; stroke: currentColor; stroke-width: 2; stroke-linejoin: round; }

.legend {
  display: flex;
  flex-wrap: wrap;
  gap: 13px 31px;
  margin: 24px 0 18px;
  padding: 0;
  list-style: none;
  color: #6c6a70;
  font-size: 22px;
  line-height: 24px;
}
.legend li { display: flex; align-items: center; gap: 11px; }
.swatch { width: 19px; height: 19px; border-radius: 4px; }
.bg-red { background: #bf1c14; }
.bg-orange { background: #bf570b; }
.bg-purple { background: #7522da; }
.bg-grey { background: #59545f; }

/* Map */
.map {
  position: relative;
  overflow: hidden;
  aspect-ratio: 682 / 894;
  border: 2px solid #d0b0f3;
  border-bottom: 0;
  border-radius: 22px 22px 0 0;
}
.map-art { width: 100%; height: 100%; }
.land { fill: #efece6; }
.farm { fill: #eaeac6; }
.grass { fill: #c8e5a9; }
.wood { fill: #a8cf9c; }
.wood.deep { fill: #a0cb94; stroke: #82bd80; stroke-width: 7; }
.park-line { fill: none; stroke: #82bd80; stroke-width: 7; }
.urban { fill: #d3d0cc; }
.scatter { fill: none; stroke-width: 54; stroke-dasharray: 44 92 70 110 30 64; }
.grass-line { stroke: #c6e0ae; }
.land-line { stroke: #ebe8e0; }
.urban-line { stroke: #cfccc8; }
.water { fill: #a6cddd; }
.river { fill: none; stroke: #a0cbdc; stroke-width: 7; }
.ferry { fill: none; stroke: #87afdf; stroke-width: 5; stroke-dasharray: 22 24; }
.minor, .streets, .primary, .trunk, .motorway, .rail { fill: none; stroke-linejoin: round; stroke-linecap: round; }
.minor { stroke: #bbb9b8; stroke-width: 5; }
.streets { stroke: #c4c2c0; stroke-width: 3; }
.primary { stroke: #fbb877; stroke-width: 8; }
.trunk { stroke: #f58a6c; stroke-width: 9; }
.motorway { stroke: #e76680; stroke-width: 10; }
.rail { stroke: #7b7a78; stroke-width: 7; }
.tile-seam { stroke: #fff; stroke-opacity: .45; stroke-width: 4; }
.place text, .park-name text {
  font-family: "Noto Sans", sans-serif;
  font-size: 57px;
  font-weight: 500;
  text-anchor: middle;
  paint-order: stroke;
  stroke: #f6f4f0;
  stroke-opacity: .8;
  stroke-width: 8;
  stroke-linejoin: round;
  fill: #48474a;
}
.place .city { font-size: 76px; }
.park-name text { font-size: 55px; font-style: italic; fill: #2f8450; stroke: #cfe8c8; }
.place .start, .park-name .start { text-anchor: start; }

.pin {
  position: absolute;
  transform: translate(-50%, -50%);
  display: flex;
  align-items: center;
  justify-content: center;
  padding: 0;
  border: 5px solid #fbf8f6;
  color: #fff;
  font: 800 23px/1 Inter, sans-serif;
  box-shadow: 0 3px 8px rgba(40, 40, 50, .4);
}
.cluster { width: 65px; height: 65px; border-radius: 50%; }
.pill { width: 78px; height: 47px; border-width: 4px; border-radius: 24px; }

/* Bottom navigation */
.tabs {
  display: grid;
  grid-template-columns: 124fr 162fr 136fr 158fr 128fr;
  align-items: start;
  justify-items: center;
  padding: 8px 0 48px;
  border-top: 2px solid #d3b3f3;
  background: #f0e6fb;
}
.tab {
  position: relative;
  display: flex;
  flex-direction: column;
  align-items: center;
  gap: 6px;
  padding-top: 5px;
  color: #35333d;
  font-size: 21px;
  line-height: 26px;
  font-weight: 500;
  text-decoration: none;
}
.tab svg { width: 42px; height: 42px; fill: none; stroke: currentColor; stroke-width: 2; stroke-linecap: round; stroke-linejoin: round; }
.tab .home-line { stroke-width: 5; }
.tab.current { color: #6f24c4; font-weight: 700; }
.fab {
  display: flex;
  align-items: center;
  justify-content: center;
  width: 92px;
  height: 91px;
  border: 0;
  border-radius: 28px;
  background: #7a26d5;
  color: #fff;
  box-shadow: 0 3px 8px rgba(122, 38, 213, .25);
}
.fab svg { width: 36px; height: 36px; fill: none; stroke: currentColor; stroke-width: 5; stroke-linecap: round; }
.badge {
  position: absolute;
  top: -6px;
  right: -16px;
  width: 32px;
  border-radius: 16px;
  background: #fb4548;
  color: #fff;
  font-size: 17px;
  line-height: 31px;
  text-align: center;
}
```
